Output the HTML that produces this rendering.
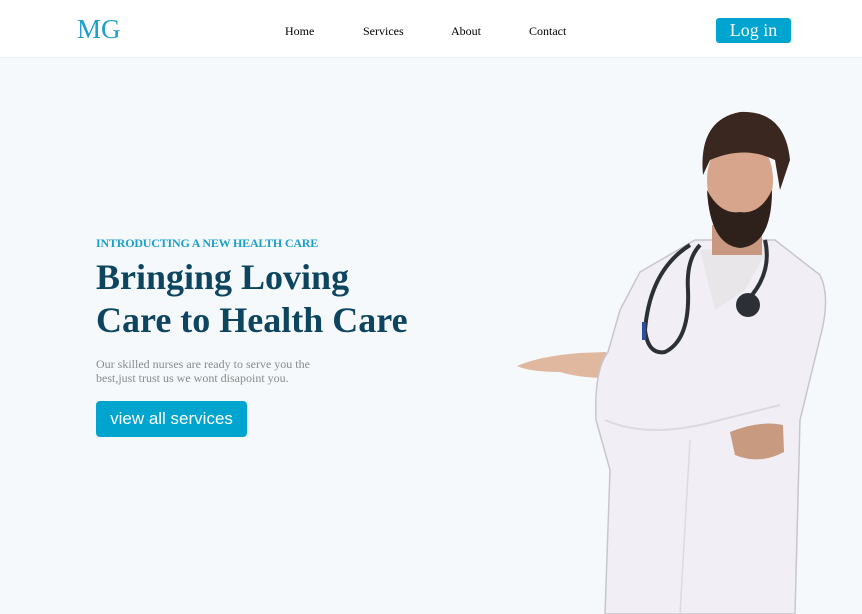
<!DOCTYPE html>
<html><head><meta charset="utf-8"><style>
*{margin:0;padding:0;box-sizing:border-box}
body{width:862px;height:614px;overflow:hidden;background:#f5f9fc;font-family:"Liberation Serif",serif;position:relative}
.hdr{position:absolute;left:0;top:0;width:862px;height:58px;background:#fff;border-bottom:1px solid #eef1f3}
.logo{position:absolute;left:77px;top:14px;font-size:27px;color:#1aa0cb}
.nav a{position:absolute;top:24px;font-size:12px;color:#000;text-decoration:none}
.login{position:absolute;left:716px;top:18px;width:75px;height:25px;background:#00a5cf;border-radius:3px;color:#fff;font-size:18px;text-align:center;line-height:25px}
.intro{position:absolute;left:96px;top:236px;font-size:12px;font-weight:bold;color:#1aa0cb;letter-spacing:-0.2px}
h1{position:absolute;left:96px;top:256px;font-size:36px;line-height:43px;color:#0d4560;font-weight:bold}
.p{position:absolute;left:96px;top:357px;font-size:12px;line-height:14px;color:#8a8a8a}
.btn{position:absolute;left:96px;top:401px;width:151px;height:36px;background:#00a5cf;border-radius:4px;color:#fff;font-family:"Liberation Sans",sans-serif;font-size:17px;text-align:center;line-height:36px}
svg{position:absolute;left:0;top:0}
</style></head><body>
<div class="hdr"></div>
<div class="logo">MG</div>
<div class="nav"><a style="left:285px">Home</a><a style="left:363px">Services</a><a style="left:451px">About</a><a style="left:529px">Contact</a></div>
<div class="login">Log in</div>
<div class="intro">INTRODUCTING A NEW HEALTH CARE</div>
<h1>Bringing Loving<br>Care to Health Care</h1>
<div class="p">Our skilled nurses are ready to serve you the<br>best,just trust us we wont disapoint you.</div>
<div class="btn">view all services</div>
<svg width="862" height="614">
<path d="M517 366 Q540 356 580 353 L606 352 L606 378 Q580 378 560 372 Q530 372 517 366Z" fill="#e0b8a0"/>
<path d="M640 272 L695 240 L775 240 L820 275 Q830 295 822 330 L800 420 L795 614 L605 614 L610 470 L596 420 Q594 370 608 352 L620 310 Z" fill="#f1eff5" stroke="#c8c6cc" stroke-width="1.5"/>
<path d="M605 420 Q650 440 720 420 L780 405" stroke="#dcdae0" stroke-width="2" fill="none"/>
<path d="M690 440 L680 614" stroke="#dcdae0" stroke-width="1.5" fill="none"/>
<path d="M700 250 L770 245 L745 290 L715 310 Z" fill="#e8e6e8"/>
<path d="M730 432 Q760 420 783 425 L784 452 Q760 465 735 455 Z" fill="#c89a80"/>
<rect x="712" y="225" width="50" height="30" fill="#c99880"/>
<ellipse cx="740" cy="180" rx="33" ry="45" fill="#d7a58c"/>
<path d="M703 175 Q698 120 740 112 Q785 110 790 160 L780 190 L775 160 Q745 145 710 160 Z" fill="#3a2820"/>
<path d="M707 190 Q710 245 740 248 Q772 245 772 190 Q760 215 740 212 Q720 215 707 190Z" fill="#2e211c"/>
<path d="M690 245 Q650 270 645 330 Q648 355 665 352 Q690 340 688 290 Q686 260 700 245" stroke="#2c3036" stroke-width="4" fill="none"/>
<path d="M765 240 Q772 270 752 295" stroke="#2c3036" stroke-width="4" fill="none"/>
<circle cx="748" cy="305" r="12" fill="#2c3036"/>
<rect x="642" y="322" width="4" height="18" fill="#2a4fa0"/>
</svg>
</body></html>
